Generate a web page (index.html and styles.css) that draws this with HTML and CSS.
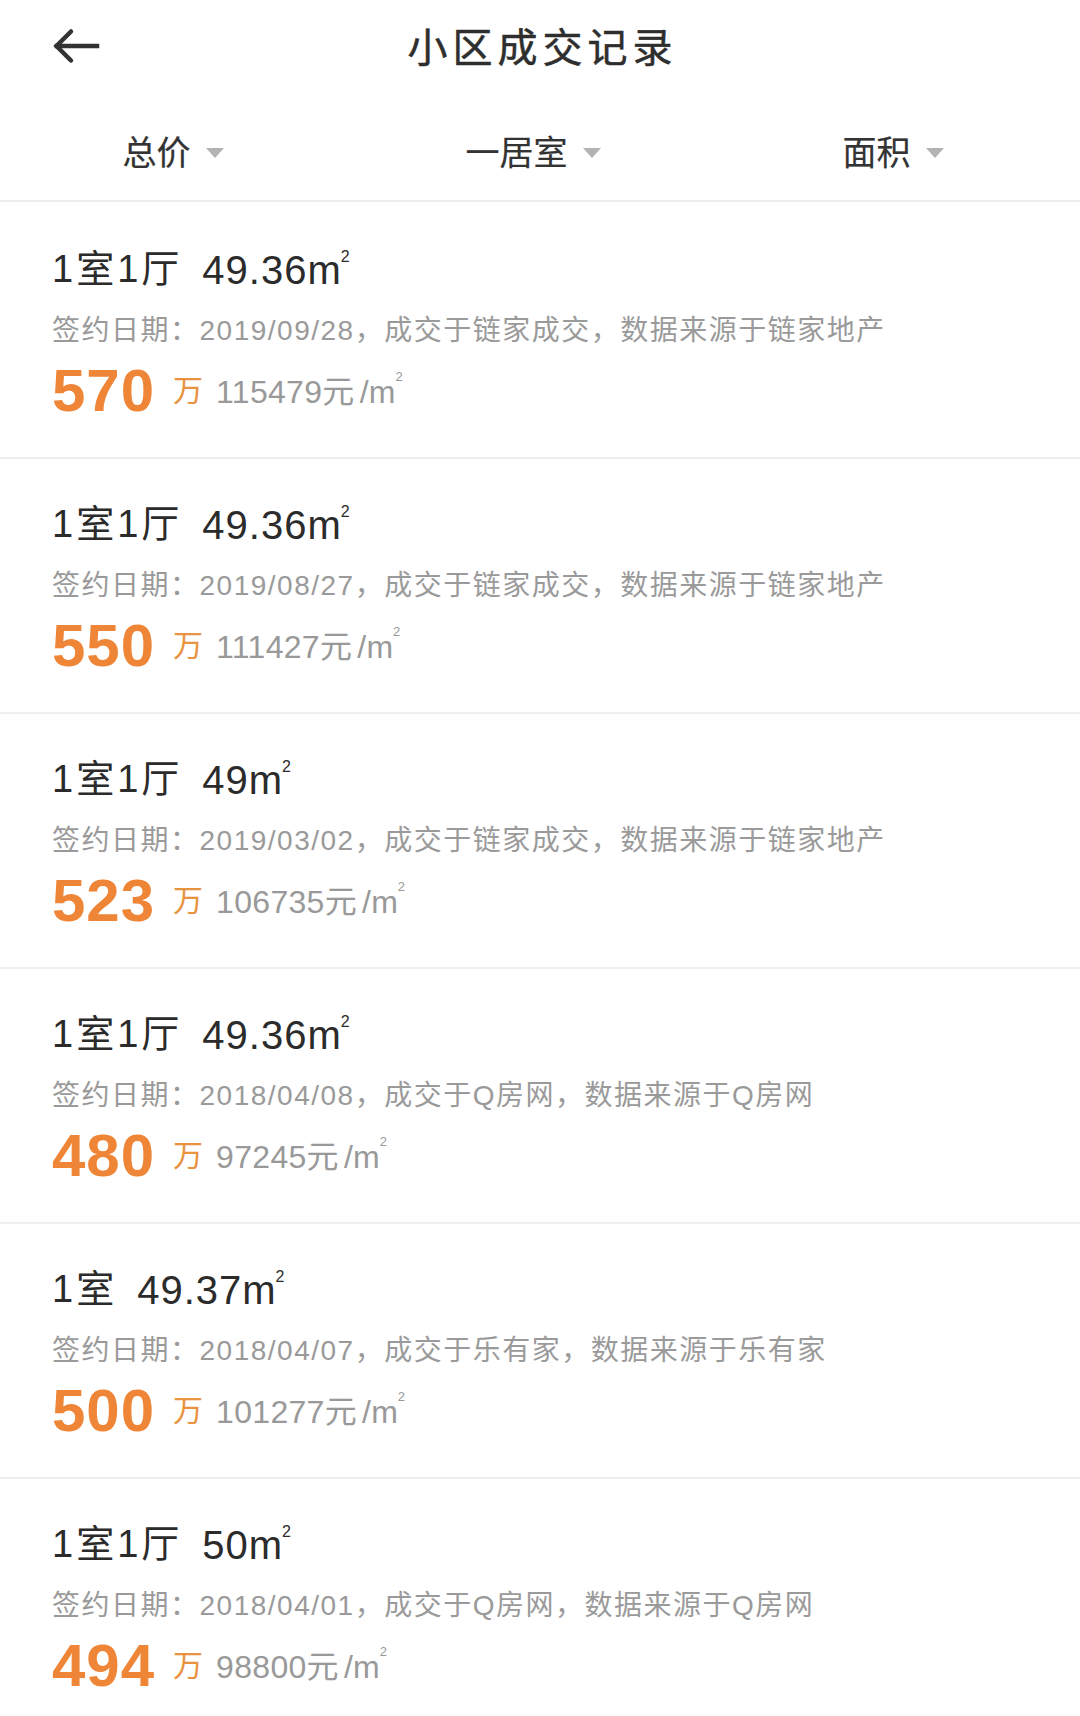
FILE: index.html
```html
<!DOCTYPE html>
<html lang="zh-CN">
<head>
<meta charset="utf-8">
<title>小区成交记录</title>
<link rel="stylesheet" href="styles.css">
</head>
<body>
<div class="page">
  <header class="topbar">
    <div class="back">
      <svg class="back-icon" width="48" height="36" viewBox="0 0 48 36" aria-hidden="true">
        <path d="M45 18 H5" fill="none" stroke="#333" stroke-width="4.5" stroke-linecap="square"/>
        <path d="M19 3.5 L4.5 18 L19 32.5" fill="none" stroke="#333" stroke-width="4.5" stroke-linecap="round" stroke-linejoin="miter"/>
      </svg>
    </div>
    <h1 class="title">小区成交记录</h1>
    <div class="spacer"></div>
  </header>

  <nav class="filters">
    <div class="filter"><span class="filter-label">总价</span><span class="caret"></span></div>
    <div class="filter"><span class="filter-label">一居室</span><span class="caret"></span></div>
    <div class="filter"><span class="filter-label">面积</span><span class="caret"></span></div>
  </nav>

  <ul class="records">
    <li class="record">
      <div class="rec-title"><span class="layout">1室1厅</span><span class="area">49.36<span class="m">m</span><span class="sq">2</span></span></div>
      <div class="rec-info">签约日期：2019/09/28，成交于链家成交，数据来源于链家地产</div>
      <div class="rec-price"><span class="total">570</span><span class="unit">万</span><span class="per">115479元<span class="slash">/</span><span class="m">m</span><span class="sq">2</span></span></div>
    </li>
    <li class="record">
      <div class="rec-title"><span class="layout">1室1厅</span><span class="area">49.36<span class="m">m</span><span class="sq">2</span></span></div>
      <div class="rec-info">签约日期：2019/08/27，成交于链家成交，数据来源于链家地产</div>
      <div class="rec-price"><span class="total">550</span><span class="unit">万</span><span class="per">111427元<span class="slash">/</span><span class="m">m</span><span class="sq">2</span></span></div>
    </li>
    <li class="record">
      <div class="rec-title"><span class="layout">1室1厅</span><span class="area">49<span class="m">m</span><span class="sq">2</span></span></div>
      <div class="rec-info">签约日期：2019/03/02，成交于链家成交，数据来源于链家地产</div>
      <div class="rec-price"><span class="total">523</span><span class="unit">万</span><span class="per">106735元<span class="slash">/</span><span class="m">m</span><span class="sq">2</span></span></div>
    </li>
    <li class="record">
      <div class="rec-title"><span class="layout">1室1厅</span><span class="area">49.36<span class="m">m</span><span class="sq">2</span></span></div>
      <div class="rec-info">签约日期：2018/04/08，成交于Q房网，数据来源于Q房网</div>
      <div class="rec-price"><span class="total">480</span><span class="unit">万</span><span class="per">97245元<span class="slash">/</span><span class="m">m</span><span class="sq">2</span></span></div>
    </li>
    <li class="record">
      <div class="rec-title"><span class="layout">1室</span><span class="area">49.37<span class="m">m</span><span class="sq">2</span></span></div>
      <div class="rec-info">签约日期：2018/04/07，成交于乐有家，数据来源于乐有家</div>
      <div class="rec-price"><span class="total">500</span><span class="unit">万</span><span class="per">101277元<span class="slash">/</span><span class="m">m</span><span class="sq">2</span></span></div>
    </li>
    <li class="record">
      <div class="rec-title"><span class="layout">1室1厅</span><span class="area">50<span class="m">m</span><span class="sq">2</span></span></div>
      <div class="rec-info">签约日期：2018/04/01，成交于Q房网，数据来源于Q房网</div>
      <div class="rec-price"><span class="total">494</span><span class="unit">万</span><span class="per">98800元<span class="slash">/</span><span class="m">m</span><span class="sq">2</span></span></div>
    </li>
  </ul>
</div>
</body>
</html>
```

FILE: styles.css
```css
* {
  box-sizing: border-box;
}

html, body {
  margin: 0;
  padding: 0;
  background: #ffffff;
}

body {
  font-family: "Liberation Sans", "Noto Sans CJK SC", sans-serif;
  color: #333333;
}

.page {
  width: 1080px;
  height: 1716px;
  overflow: hidden;
  background: #ffffff;
}

/* top bar */
.topbar {
  height: 96px;
  display: grid;
  grid-template-columns: 1fr auto 1fr;
  align-items: center;
}

.back {
  padding-left: 52px;
  display: flex;
  align-items: center;
  padding-bottom: 4px;
}

.back-icon {
  display: block;
}

.title {
  margin: 0;
  font-size: 40px;
  font-weight: normal;
  letter-spacing: 5px;
  padding-left: 5px;
  line-height: 1;
  color: #2e2e2e;
  -webkit-text-stroke: 0.5px #2e2e2e;
}

/* filter bar */
.filters {
  height: 106px;
  padding-top: 10px;
  display: grid;
  grid-template-columns: repeat(3, 1fr);
  align-items: center;
  border-bottom: 2px solid #ededed;
}

.filter {
  display: flex;
  justify-content: center;
  align-items: center;
  padding-right: 14px;
}

.filter-label {
  font-size: 34px;
  line-height: 1;
  color: #333333;
  -webkit-text-stroke: 0.2px #333333;
}

.caret {
  margin-left: 15px;
  width: 0;
  height: 0;
  border-left: 9.5px solid transparent;
  border-right: 9.5px solid transparent;
  border-top: 10px solid #b3b3b3;
}

/* record list */
.records {
  list-style: none;
  margin: 0;
  padding: 2px 0 0 0;
}

.record {
  height: 255px;
  padding: 40px 52px 0 52px;
  border-bottom: 2px solid #efefef;
  display: flex;
  flex-direction: column;
}

.rec-title {
  height: 50px;
  display: flex;
  align-items: center;
  font-size: 38px;
  color: #2b2b2b;
  letter-spacing: 3px;
  white-space: nowrap;
}

.layout {
  line-height: 1;
}

.area {
  margin-left: 20px;
  font-size: 40px;
  line-height: 1;
  letter-spacing: 1px;
}

.m {
  letter-spacing: 0;
}

.sq {
  font-size: 16px;
  vertical-align: 1.35em;
  letter-spacing: 0;
}

.rec-info {
  margin-top: 14px;
  height: 40px;
  display: flex;
  align-items: center;
  font-size: 28px;
  letter-spacing: 1.5px;
  color: #9a9a9a;
  white-space: nowrap;
}

.rec-price {
  margin-top: 13px;
  height: 60px;
  display: flex;
  align-items: center;
  white-space: nowrap;
}

.total {
  font-size: 60px;
  font-weight: bold;
  line-height: 1;
  letter-spacing: 1px;
  color: #ef8536;
}

.unit {
  margin-left: 18px;
  font-size: 30px;
  line-height: 1;
  color: #e8933f;
}

.per {
  margin-left: 13px;
  margin-bottom: 4px;
  font-size: 32px;
  line-height: 1;
  letter-spacing: 0.3px;
  color: #999999;
}

.per .sq {
  font-size: 13px;
  vertical-align: 1.7em;
}

.slash {
  margin-left: 5px;
}
```
